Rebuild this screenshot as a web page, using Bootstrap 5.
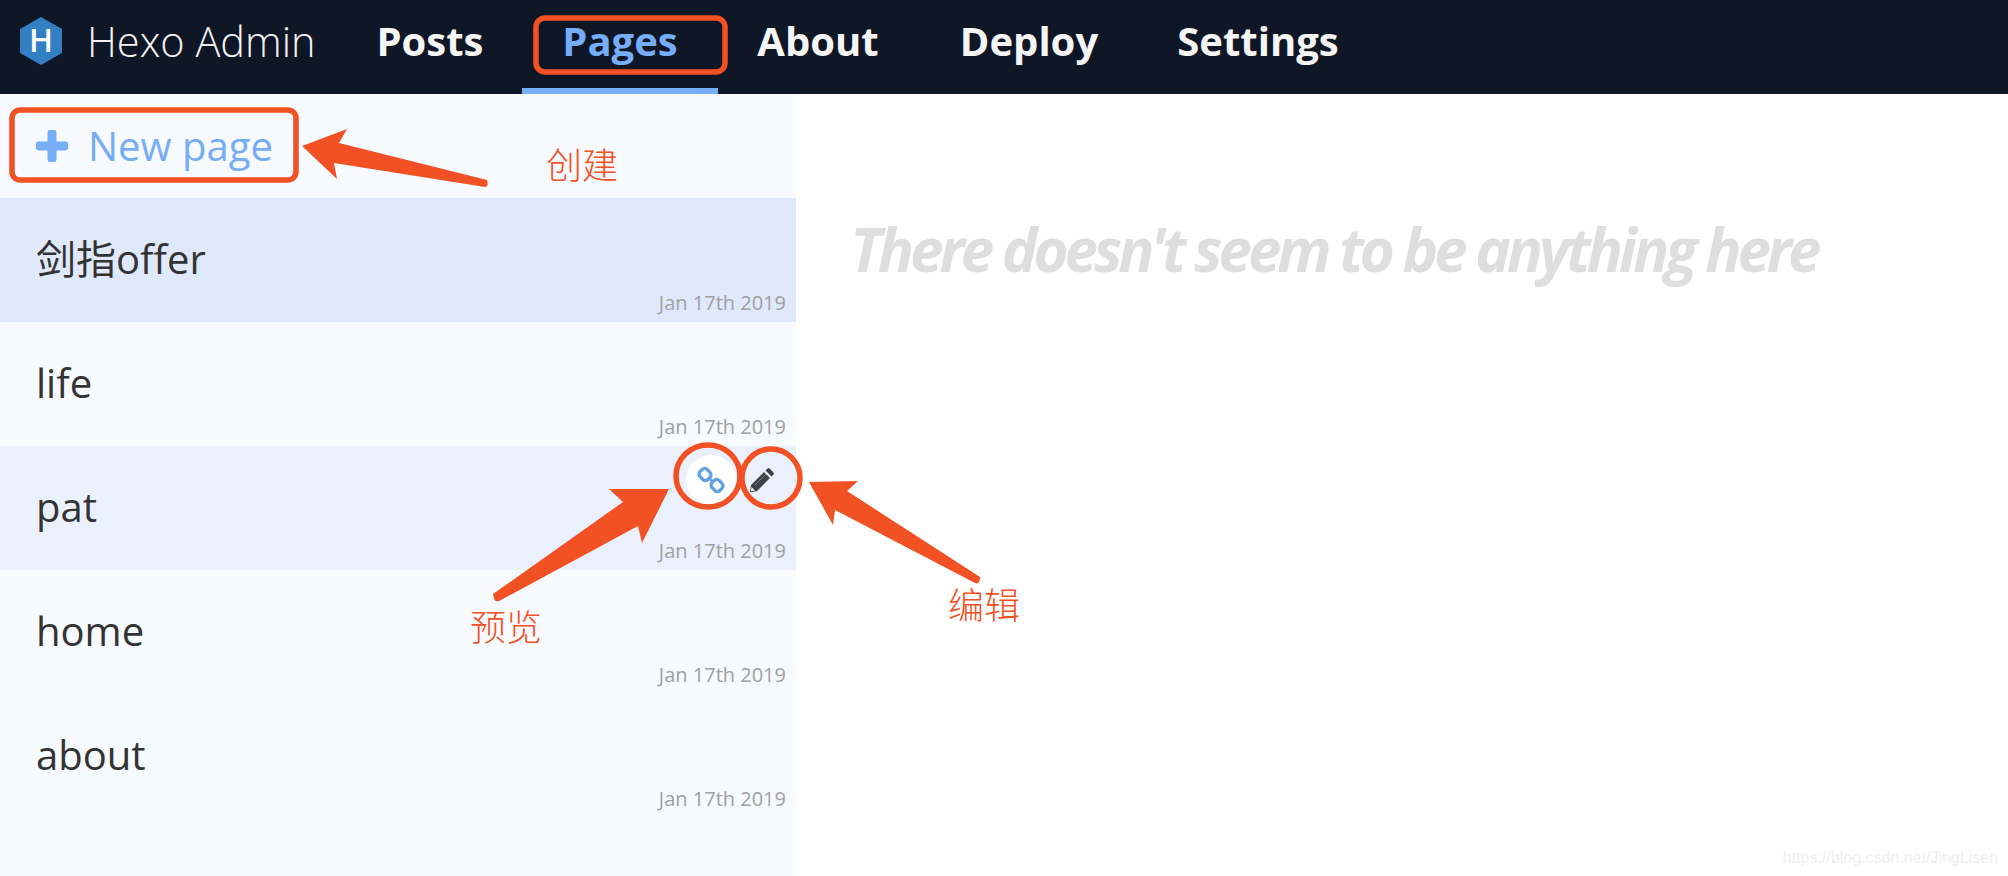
<!DOCTYPE html>
<html lang="en">
<head>
    <meta charset="UTF-8">
    <title>Hexo Admin</title>
    <link rel="stylesheet" href="https://cdn.jsdelivr.net/npm/bootstrap@5.3.0/dist/css/bootstrap.min.css">
    <style>
        html, body { height: 100%; }
        body { position: relative; overflow: hidden; background: #fff; font-family: "Open Sans", "Noto Sans CJK SC", sans-serif; }
        .top-bar { height: 94px; background: #0f1626; padding: 0; align-items: stretch; flex-wrap: nowrap; justify-content: flex-start; }
        .top-brand { display: flex; align-items: center; gap: 25px; margin: 0; padding: 0 0 12px 20px; width: 338px; color: #f2f2f2; font-size: 41.5px; font-weight: 300; }
        .top-brand:hover { color: #f2f2f2; }
        .top-links { flex-direction: row; }
        .top-links .nav-link { display: flex; align-items: center; justify-content: center; height: 94px; color: #f5f5f5; font-size: 40px; font-weight: 700; padding: 0 0 6px; border-bottom: 6px solid transparent; }
        .top-links .nav-link.active { color: #75adf8; border-bottom-color: #75adf8; }
        .link-posts { width: 184px; }
        .link-pages { width: 196px; }
        .link-about { width: 200px; }
        .link-deploy { width: 222px; }
        .link-settings { width: 236px; }
        .page-area { height: 782px; }
        .side-list { width: 796px; background: #f7faff; flex: none; }
        .new-page { height: 104px; gap: 20px; padding-left: 36px; color: #75adf8; font-size: 40px; }
        .page-row { height: 124px; padding: 0 10px 0 36px; border: 0; border-radius: 0; position: relative; }
        .page-row.is-selected { background: #e0e9fb; }
        .page-row.is-hover { background: #eaf1fd; }
        .page-title { font-size: 40px; color: #333; line-height: 52px; padding-top: 35px; }
        .page-date { font-size: 20px; color: #a0a0a0; line-height: 24px; text-align: right; margin-top: 6px; }
        .row-tools { position: absolute; top: 9px; left: 686px; gap: 1px; }
        .tool-btn { width: 50px; height: 50px; border-radius: 50%; background: transparent; }
        .tool-btn.on { background: #fff; }
        .empty-note { font-size: 60px; font-weight: 700; font-style: italic; color: #dedede; letter-spacing: -4px; padding: 118px 0 0 54px; line-height: 75px; white-space: nowrap; }
        .marks { position: absolute; left: 0; top: 0; pointer-events: none; }
        .mark-text { position: absolute; color: #f25124; font-size: 36px; line-height: 40px; font-weight: 300; font-family: "Noto Sans CJK SC", sans-serif; }
        .mark-create { left: 546px; top: 143px; }
        .mark-preview { left: 470px; top: 605px; }
        .mark-edit { left: 948px; top: 583px; }
        .water { position: absolute; right: 10px; bottom: 7px; font-family: "Liberation Sans", sans-serif; font-size: 16px; line-height: 22px; color: #efefef; }
    </style>
</head>
<body>

    <nav class="navbar top-bar">
        <a class="navbar-brand top-brand" href="#">
            <svg width="42" height="48" viewBox="0 0 42 48">
                <polygon points="21,0 42,12 42,36 21,48 0,36 0,12" fill="#327fc4"/>
                <text x="21" y="35" text-anchor="middle" font-family="Open Sans" font-weight="600" font-size="32" fill="#fff">H</text>
            </svg>
            Hexo Admin
        </a>
        <ul class="nav top-links">
            <li class="nav-item"><a class="nav-link link-posts" href="#">Posts</a></li>
            <li class="nav-item"><a class="nav-link active link-pages" href="#">Pages</a></li>
            <li class="nav-item"><a class="nav-link link-about" href="#">About</a></li>
            <li class="nav-item"><a class="nav-link link-deploy" href="#">Deploy</a></li>
            <li class="nav-item"><a class="nav-link link-settings" href="#">Settings</a></li>
        </ul>
    </nav>

    <div class="d-flex page-area">
        <div class="side-list">
            <div class="d-flex align-items-center new-page">
                <svg width="32" height="32" viewBox="0 0 32 32"><path d="M16 3v26M3 16h26" stroke="#75adf8" stroke-width="9" stroke-linecap="round"/></svg>
                New page
            </div>
            <div class="list-group list-group-flush">
                <div class="list-group-item page-row is-selected">
                    <div class="page-title">剑指offer</div>
                    <div class="page-date">Jan 17th 2019</div>
                </div>
                <div class="list-group-item page-row bg-transparent">
                    <div class="page-title">life</div>
                    <div class="page-date">Jan 17th 2019</div>
                </div>
                <div class="list-group-item page-row is-hover">
                    <div class="d-flex row-tools">
                        <div class="d-flex align-items-center justify-content-center tool-btn on">
                            <svg width="28" height="28" viewBox="0 0 28 28" fill="none" stroke="#62a2e4" stroke-width="3.4">
                                <rect x="2.500" y="3.500" width="11" height="10" rx="3.500" transform="rotate(45 8 8.500)"/>
                                <rect x="14.500" y="14.500" width="11" height="10" rx="3.500" transform="rotate(45 20 19.500)"/>
                                <path d="M12 12l4 4" stroke-width="2.600"/>
                            </svg>
                        </div>
                        <div class="d-flex align-items-center justify-content-center tool-btn">
                            <svg width="26" height="26" viewBox="0 0 26 26">
                                <path d="M18.500 1.500a1.500 1.500 0 0 1 2 0l4 4a1.500 1.500 0 0 1 0 2l-2 2-6-6zM15 5l6 6L8 24l-7 1.500L2 18z" fill="#3f4347"/>
                                <path d="M2.500 20l3.500 3.500-4 .8z" fill="#fff"/>
                                <path d="M6 18L17 7" stroke="#8a8d91" stroke-width=".8"/>
                            </svg>
                        </div>
                    </div>
                    <div class="page-title">pat</div>
                    <div class="page-date">Jan 17th 2019</div>
                </div>
                <div class="list-group-item page-row bg-transparent">
                    <div class="page-title">home</div>
                    <div class="page-date">Jan 17th 2019</div>
                </div>
                <div class="list-group-item page-row bg-transparent">
                    <div class="page-title">about</div>
                    <div class="page-date">Jan 17th 2019</div>
                </div>
            </div>
        </div>
        <div class="flex-grow-1 empty-note">There doesn't seem to be anything here</div>
    </div>

    <svg class="marks" width="2008" height="876" viewBox="0 0 2008 876">
        <g fill="none" stroke="#f25124" stroke-width="5.500">
            <rect x="12" y="110" width="284" height="70" rx="8"/>
            <rect x="536" y="18" width="189" height="54" rx="9"/>
            <ellipse cx="708" cy="476" rx="32" ry="31"/>
            <ellipse cx="771" cy="478" rx="29" ry="29"/>
        </g>
        <g fill="#f25124">
            <path d="M302 146L347 129L339 143L487 180Q489 187 485 187L334 163L337 179Z"/>
            <path d="M669 489L609 489L623 502L493 594Q494 603 499 601L638 526L642 543Z"/>
            <path d="M809 482L858 481L847 491L980 577Q980 585 975 583L835 510L833 525Z"/>
        </g>
    </svg>
    <div class="mark-text mark-create">创建</div>
    <div class="mark-text mark-preview">预览</div>
    <div class="mark-text mark-edit">编辑</div>
    <div class="water">https://blog.csdn.net/JingLisen</div>

    <script src="https://cdn.jsdelivr.net/npm/bootstrap@5.3.0/dist/js/bootstrap.bundle.min.js"></script>
</body>
</html>
